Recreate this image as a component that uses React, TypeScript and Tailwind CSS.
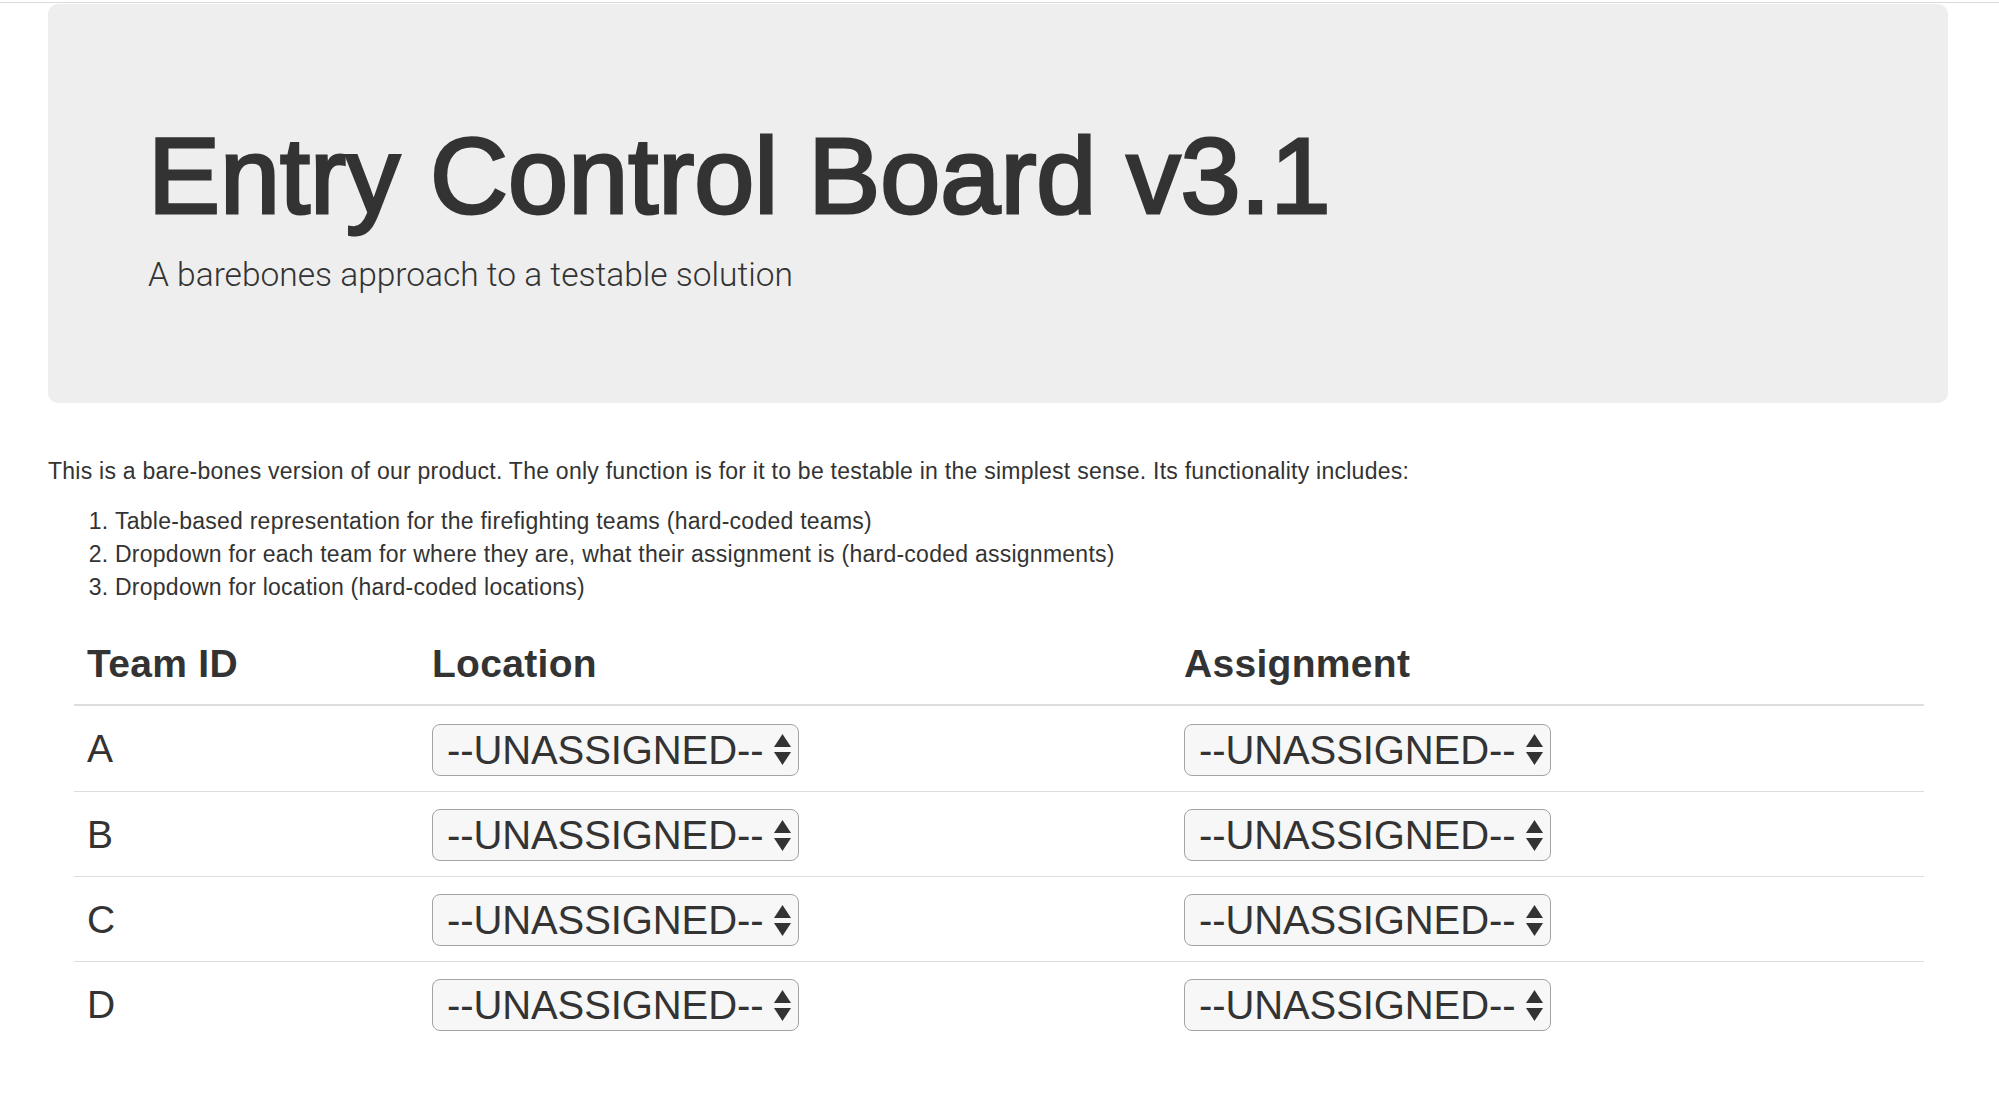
import React from "react";

const teams = ["A", "B", "C", "D"];

function Arrows() {
  return (
    <svg width="17" height="31" viewBox="0 0 17 31" className="shrink-0">
      <polygon points="8.5,0 17,13 0,13" fill="#333" />
      <polygon points="0,18 17,18 8.5,31" fill="#333" />
    </svg>
  );
}

function Dropdown() {
  return (
    <div className="flex h-[52px] w-[367px] items-center justify-between rounded-[8px] border border-[#a3a3a3] bg-[#f7f7f7] pl-[14px] pr-[7px]">
      <span className="text-[40px] leading-none tracking-[-0.1px] text-[#333]">--UNASSIGNED--</span>
      <Arrows />
    </div>
  );
}

export default function App() {
  return (
    <div className="min-h-screen bg-white text-[#333] font-['Liberation_Sans',Arial,sans-serif]">
      <div className="h-[3px] border-b border-[#dadada]" />
      <div className="pl-[48px] pr-[51px]">
        <div className="mt-[1px] h-[399px] rounded-[10px] bg-[#eeeeee] pl-[100px] pt-[113px]">
          <h1 className="text-[108px] leading-[118px] tracking-[0px] [-webkit-text-stroke:3px_#333]">
            Entry Control Board v3.1
          </h1>
          <p className="mt-[15px] font-['Roboto',sans-serif] text-[33.5px] font-light leading-[50px]">
            A barebones approach to a testable solution
          </p>
        </div>

        <p className="mt-[52px] text-[23px] leading-[33px] tracking-[0.25px]">
          This is a bare-bones version of our product. The only function is for it to be testable in the simplest sense. Its functionality includes:
        </p>
        <ol className="mt-[17px] list-decimal pl-[67px] text-[23px] leading-[33px] tracking-[0.25px]">
          <li>Table-based representation for the firefighting teams (hard-coded teams)</li>
          <li>Dropdown for each team for where they are, what their assignment is (hard-coded assignments)</li>
          <li>Dropdown for location (hard-coded locations)</li>
        </ol>

        <div className="ml-[26px] mt-[16px] w-[1850px]">
          <div className="grid h-[86px] grid-cols-[345px_752px_753px] items-center border-b-2 border-[#dddddd] pt-[4px] text-[39px] font-bold tracking-[0.3px]">
            <div className="px-[13px]">Team ID</div>
            <div className="px-[13px]">Location</div>
            <div className="px-[13px]">Assignment</div>
          </div>
          {teams.map((t, i) => (
            <div
              key={t}
              className={
                "grid h-[85px] grid-cols-[345px_752px_753px] items-center text-[39px] " +
                (i > 0 ? "border-t border-[#dddddd]" : "")
              }
            >
              <div className="px-[13px] pt-[2px]">{t}</div>
              <div className="px-[13px] pt-[2px]">
                <Dropdown />
              </div>
              <div className="px-[13px] pt-[2px]">
                <Dropdown />
              </div>
            </div>
          ))}
        </div>
      </div>
    </div>
  );
}
